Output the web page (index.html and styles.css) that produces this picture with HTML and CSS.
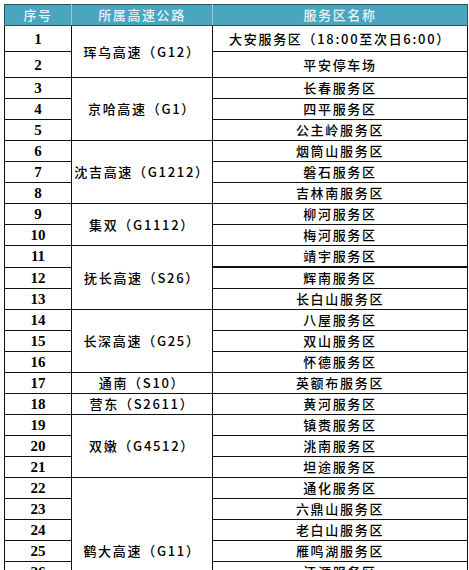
FILE: index.html
```html
<!DOCTYPE html>
<html lang="zh-CN">
<head>
<meta charset="utf-8">
<title>服务区</title>
<link rel="stylesheet" href="styles.css">
</head>
<body>
<table class="tbl">
  <colgroup><col class="c1"><col class="c2"><col class="c3"></colgroup>
  <thead>
    <tr class="head"><th>序号</th><th>所属高速公路</th><th>服务区名称</th></tr>
  </thead>
  <tbody>
    <tr class="tall"><td class="no">1</td><td class="hw" rowspan="2">珲乌高速（G12）</td><td class="nm">大安服务区（18:00至次日6:00）</td></tr>
    <tr class="tall"><td class="no">2</td><td class="nm">平安停车场</td></tr>
    <tr><td class="no">3</td><td class="hw" rowspan="3">京哈高速（G1）</td><td class="nm">长春服务区</td></tr>
    <tr><td class="no">4</td><td class="nm">四平服务区</td></tr>
    <tr><td class="no">5</td><td class="nm">公主岭服务区</td></tr>
    <tr><td class="no">6</td><td class="hw" rowspan="3">沈吉高速（G1212）</td><td class="nm">烟筒山服务区</td></tr>
    <tr><td class="no">7</td><td class="nm">磐石服务区</td></tr>
    <tr><td class="no">8</td><td class="nm">吉林南服务区</td></tr>
    <tr><td class="no">9</td><td class="hw" rowspan="2">集双（G1112）</td><td class="nm">柳河服务区</td></tr>
    <tr><td class="no">10</td><td class="nm">梅河服务区</td></tr>
    <tr><td class="no">11</td><td class="hw" rowspan="3">抚长高速（S26）</td><td class="nm">靖宇服务区</td></tr>
    <tr class="thick"><td class="no light">12</td><td class="nm">辉南服务区</td></tr>
    <tr><td class="no">13</td><td class="nm">长白山服务区</td></tr>
    <tr><td class="no">14</td><td class="hw" rowspan="3">长深高速（G25）</td><td class="nm">八屋服务区</td></tr>
    <tr><td class="no">15</td><td class="nm">双山服务区</td></tr>
    <tr><td class="no">16</td><td class="nm">怀德服务区</td></tr>
    <tr><td class="no">17</td><td class="hw">通南（S10）</td><td class="nm">英额布服务区</td></tr>
    <tr><td class="no">18</td><td class="hw">营东（S2611）</td><td class="nm">黄河服务区</td></tr>
    <tr><td class="no">19</td><td class="hw" rowspan="3">双嫩（G4512）</td><td class="nm">镇赉服务区</td></tr>
    <tr><td class="no">20</td><td class="nm">洮南服务区</td></tr>
    <tr><td class="no">21</td><td class="nm">坦途服务区</td></tr>
    <tr><td class="no">22</td><td class="hw" rowspan="7">鹤大高速（G11）</td><td class="nm">通化服务区</td></tr>
    <tr><td class="no">23</td><td class="nm">六鼎山服务区</td></tr>
    <tr><td class="no">24</td><td class="nm">老白山服务区</td></tr>
    <tr><td class="no">25</td><td class="nm">雁鸣湖服务区</td></tr>
    <tr><td class="no">26</td><td class="nm">江源服务区</td></tr>
    <tr><td class="no">27</td><td class="nm">露水河服务区</td></tr>
    <tr><td class="no">28</td><td class="nm">抚松服务区</td></tr>
  </tbody>
</table>
</body>
</html>
```
FILE: styles.css
```css
html, body {
  margin: 0;
  padding: 0;
  background: #ffffff;
  overflow: hidden;
}
.tbl {
  margin: 4px 0 0 4px;
  width: 463px;
  table-layout: fixed;
  border-collapse: collapse;
  font-family: "Noto Sans CJK SC", "Noto Sans", sans-serif;
  color: #000000;
}
.c1 { width: 67px; }
.c2 { width: 141px; }
.c3 { width: 255px; }
.head th {
  height: 20px;
  padding: 0;
  background: #4aa6bf;
  color: #e6f3f7;
  font-weight: 500;
  font-size: 13px;
  letter-spacing: 1.6px;
  border: 1px solid #2f4f57;
  border-left-color: #9cc9d6;
  border-right-color: #9cc9d6;
  line-height: 20px;
}
.head th:first-child { border-left-color: #2f4f57; }
.head th:last-child { border-right-color: #2f4f57; }
td {
  border: 1px solid #111111;
  padding: 0;
  height: 20px;
  text-align: center;
  vertical-align: middle;
  line-height: 18px;
}
.tall td { height: 25px; }
.no {
  font-family: "Liberation Serif", "DejaVu Serif", serif;
  font-weight: bold;
  font-size: 15px;
}
.hw, .nm {
  font-size: 13px;
  font-weight: 500;
  letter-spacing: 1.7px;
  white-space: nowrap;
}
.thick .nm { border-top: 2px solid #111111; }
.thick .light { border-top-color: #b9c6c8; }
```
